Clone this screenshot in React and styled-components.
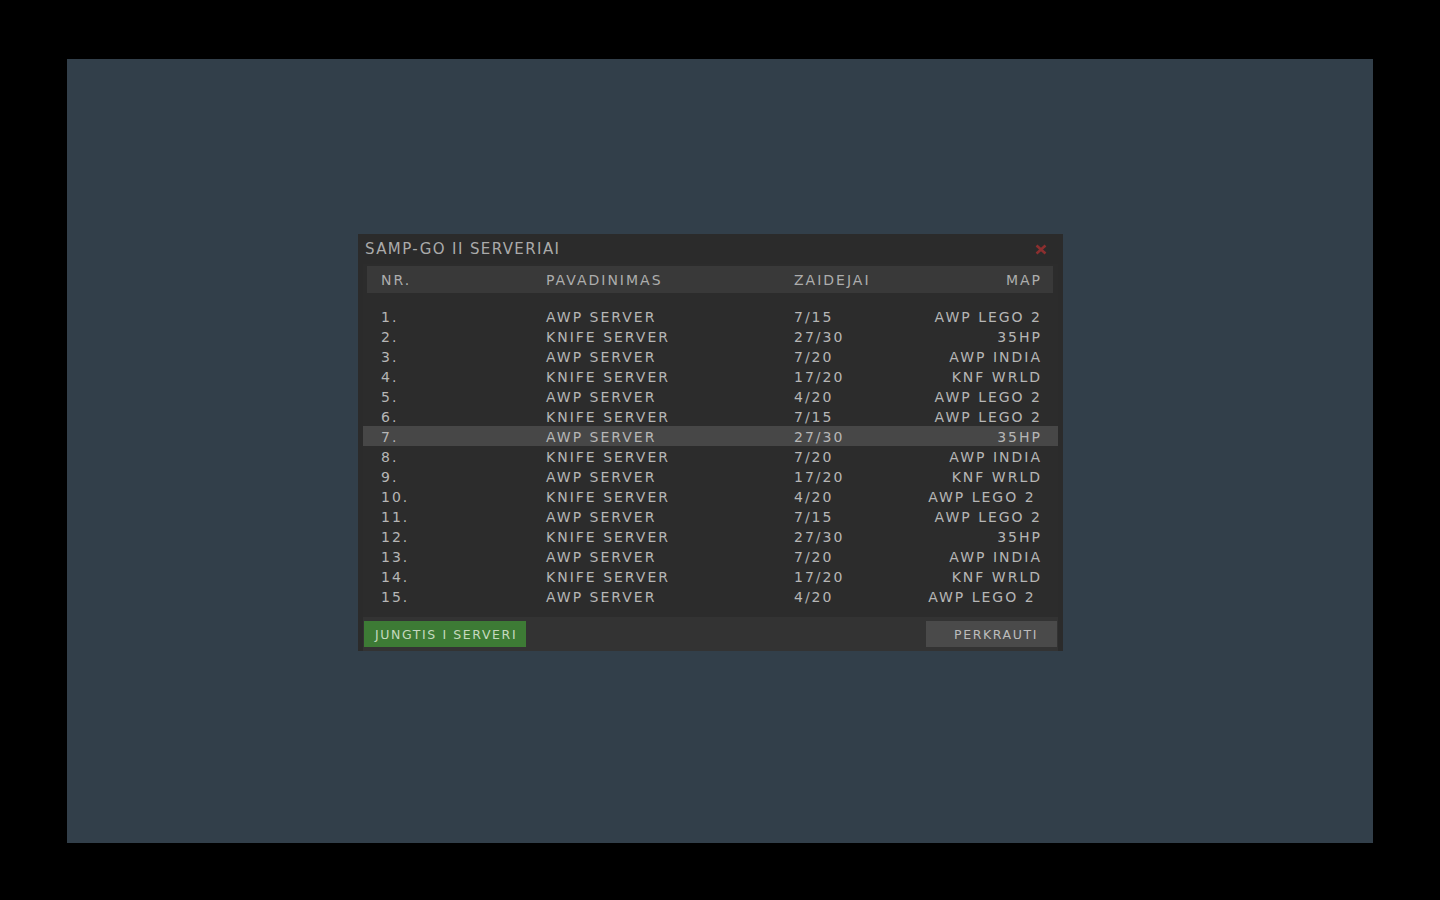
import React from "react";
import styled, { createGlobalStyle } from "styled-components";

const Global = createGlobalStyle`
  html, body { margin: 0; padding: 0; background: #000; }
  body { font-family: "DejaVu Sans", "Liberation Sans", sans-serif; }
`;

const Screen = styled.div`
  width: 1440px;
  height: 900px;
  box-sizing: border-box;
  padding: 59px 67px 57px 67px;
  background: #000;
`;

const Backdrop = styled.div`
  width: 100%;
  height: 100%;
  background: #323f4a;
  display: flex;
  align-items: center;
  justify-content: center;
  box-sizing: border-box;
  padding: 0 19px 17px 0;
`;

const Dialog = styled.div`
  width: 705px;
  height: 417px;
  box-sizing: border-box;
  background: #2b2b2b;
  display: flex;
  flex-direction: column;
  padding: 0 5px 4px 5px;
`;

const TitleBar = styled.div`
  height: 30px;
  display: flex;
  align-items: center;
  justify-content: space-between;
  padding: 0 11px 0 2px;
`;

const Title = styled.div`
  font-size: 15px;
  letter-spacing: 1.4px;
  color: #aaaaaa;
  padding-bottom: 1px;
`;

const Close = styled.svg`
  width: 12px;
  height: 11px;
  display: block;
`;

const Content = styled.div`
  flex: 1;
  background: #2c2c2c;
  display: flex;
  flex-direction: column;
  padding-top: 2px;
`;

const cols = `
  display: grid;
  grid-template-columns: 165px 248px 1fr auto;
  align-items: center;
  font-size: 14px;
  letter-spacing: 2px;
  white-space: pre;
`;

const Header = styled.div`
  ${cols}
  margin: 0 5px 0 4px;
  height: 27px;
  box-sizing: border-box;
  background: #393939;
  padding: 1px 11px 0 14px;
  color: #adadad;
`;

const List = styled.div`
  padding: 13px 0 11px 0;
  display: flex;
  flex-direction: column;
  flex: 1;
`;

const Row = styled.div`
  ${cols}
  height: 20px;
  box-sizing: border-box;
  padding: 1px 16px 0 18px;
  color: #b6b6b6;
  background: ${(p) => (p.$active ? "#474747" : "transparent")};
`;

const Right = styled.span`
  text-align: right;
`;

const Footer = styled.div`
  height: 34px;
  background: #333333;
  display: flex;
  align-items: center;
  justify-content: space-between;
  padding: 0 1px 0 1px;
  margin: 0 0 -4px 0;
`;

const Button = styled.div`
  height: 26px;
  width: ${(p) => p.$w}px;
  background: ${(p) => (p.$green ? "#3d7b35" : "#4a4a4a")};
  color: ${(p) => (p.$green ? "#c5d9bf" : "#bcbcbc")};
  font-size: 12.5px;
  letter-spacing: 1.6px;
  display: flex;
  align-items: center;
  justify-content: ${(p) => (p.$green ? "flex-start" : "flex-end")};
  padding: ${(p) => (p.$green ? "0 0 0 11px" : "0 19px 0 0")};
  box-sizing: border-box;
`;

const servers = [
  ["1.", "AWP SERVER", "7/15", "AWP LEGO 2"],
  ["2.", "KNIFE SERVER", "27/30", "35HP"],
  ["3.", "AWP SERVER", "7/20", "AWP INDIA"],
  ["4.", "KNIFE SERVER", "17/20", "KNF WRLD"],
  ["5.", "AWP SERVER", "4/20", "AWP LEGO 2"],
  ["6.", "KNIFE SERVER", "7/15", "AWP LEGO 2"],
  ["7.", "AWP SERVER", "27/30", "35HP"],
  ["8.", "KNIFE SERVER", "7/20", "AWP INDIA"],
  ["9.", "AWP SERVER", "17/20", "KNF WRLD"],
  ["10.", "KNIFE SERVER", "4/20", "AWP LEGO 2 "],
  ["11.", "AWP SERVER", "7/15", "AWP LEGO 2"],
  ["12.", "KNIFE SERVER", "27/30", "35HP"],
  ["13.", "AWP SERVER", "7/20", "AWP INDIA"],
  ["14.", "KNIFE SERVER", "17/20", "KNF WRLD"],
  ["15.", "AWP SERVER", "4/20", "AWP LEGO 2 "],
];

export default function App() {
  return (
    <>
      <Global />
      <Screen>
        <Backdrop>
          <Dialog>
            <TitleBar>
              <Title>SAMP-GO II SERVERIAI</Title>
              <Close viewBox="0 0 12 11">
                <path d="M1.5 1.5 L10.5 9.5 M10.5 1.5 L1.5 9.5" stroke="#8c2f2f" strokeWidth="2.6" />
              </Close>
            </TitleBar>
            <Content>
              <Header>
                <span>NR.</span>
                <span>PAVADINIMAS</span>
                <span>ZAIDEJAI</span>
                <Right>MAP</Right>
              </Header>
              <List>
                {servers.map((s, i) => (
                  <Row key={i} $active={i === 6}>
                    <span>{s[0]}</span>
                    <span>{s[1]}</span>
                    <span>{s[2]}</span>
                    <Right>{s[3]}</Right>
                  </Row>
                ))}
              </List>
            </Content>
            <Footer>
              <Button $green $w={162}>JUNGTIS I SERVERI</Button>
              <Button $w={131}>PERKRAUTI</Button>
            </Footer>
          </Dialog>
        </Backdrop>
      </Screen>
    </>
  );
}
